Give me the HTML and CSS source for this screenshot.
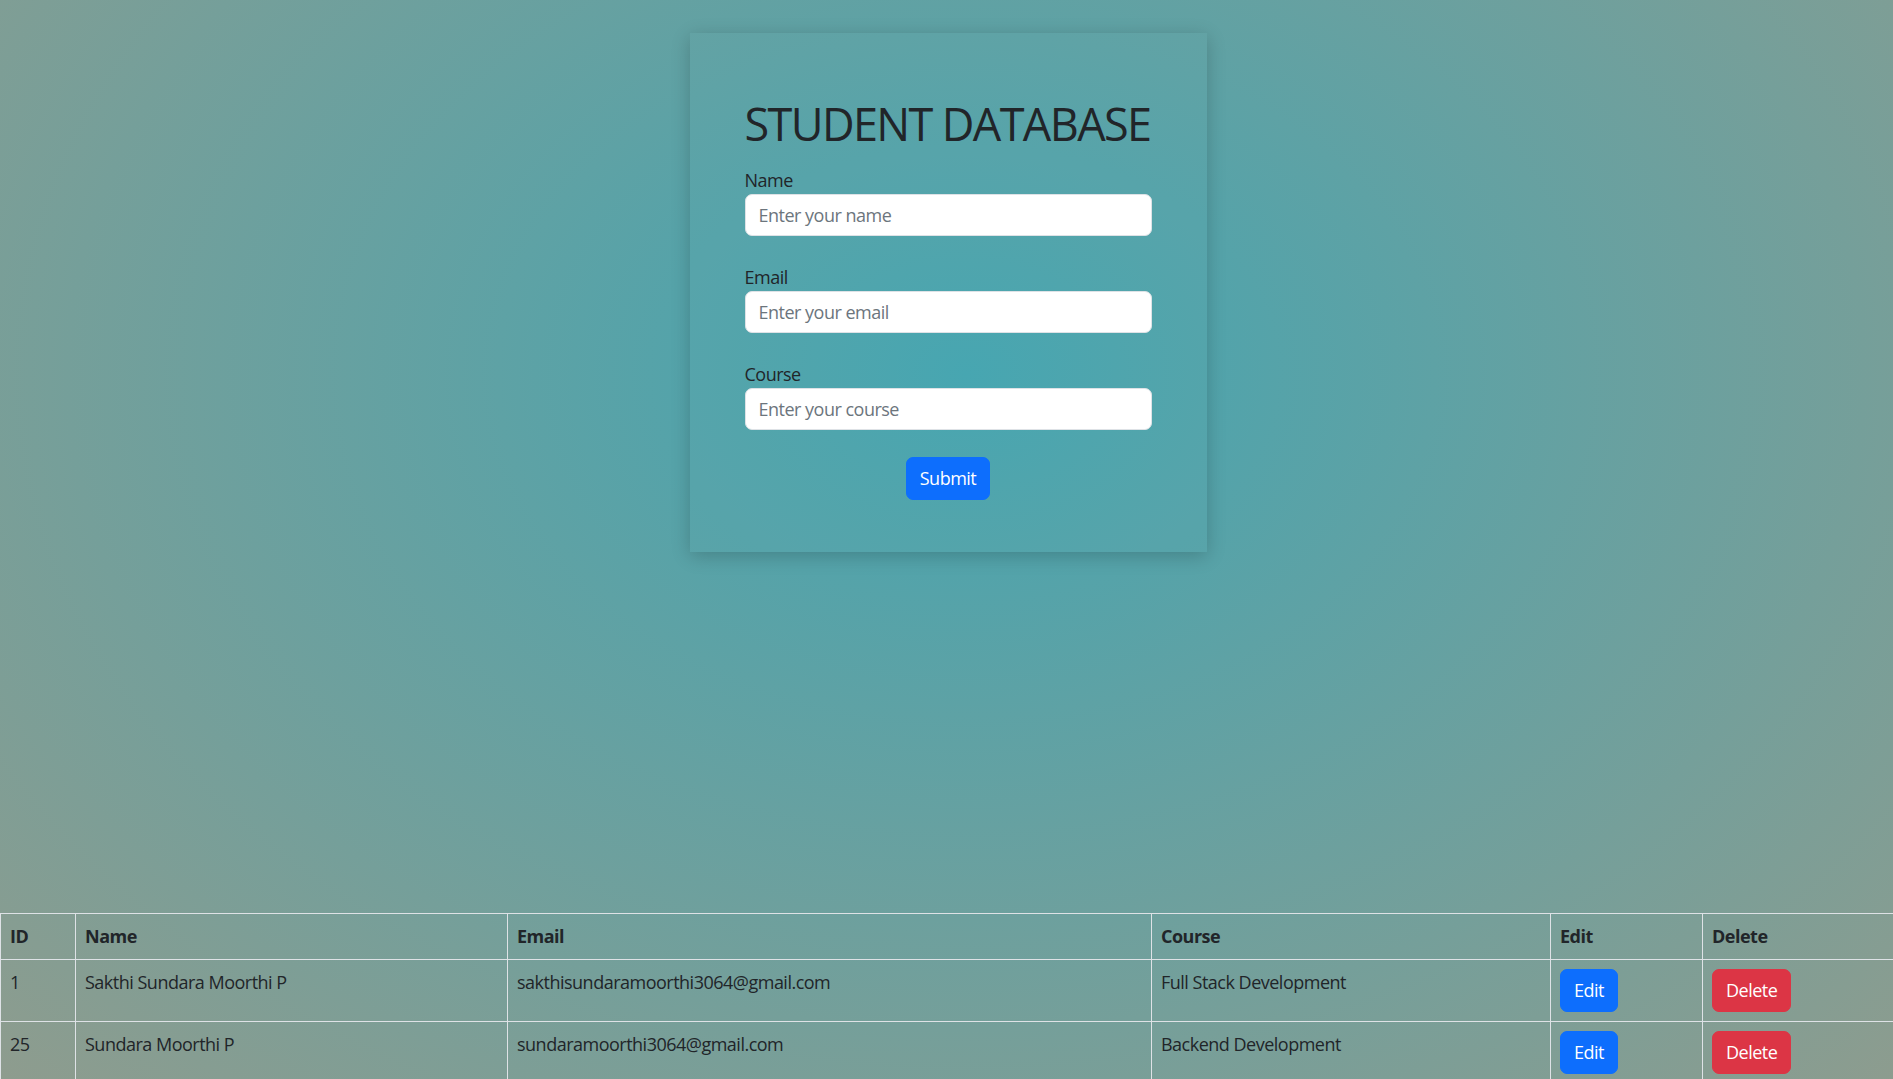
FILE: index.html
```html
<!DOCTYPE html>
<html lang="en">
<head>
<meta charset="utf-8">
<title>Student Database</title>
<link rel="stylesheet" href="styles.css">
</head>
<body>
<div class="wrap">
  <form class="card">
    <h1 class="title">STUDENT DATABASE</h1>
    <div class="group">
      <label class="label" for="name">Name</label>
      <input class="input" id="name" type="text" placeholder="Enter your name">
    </div>
    <div class="group">
      <label class="label" for="email">Email</label>
      <input class="input" id="email" type="email" placeholder="Enter your email">
    </div>
    <div class="group group-last">
      <label class="label" for="course">Course</label>
      <input class="input" id="course" type="text" placeholder="Enter your course">
    </div>
    <div class="actions">
      <button type="button" class="btn btn-primary">Submit</button>
    </div>
  </form>
</div>
<table class="table">
  <colgroup>
    <col class="c-id"><col class="c-name"><col class="c-email"><col class="c-course"><col class="c-edit"><col class="c-del">
  </colgroup>
  <thead>
    <tr><th>ID</th><th>Name</th><th>Email</th><th>Course</th><th>Edit</th><th>Delete</th></tr>
  </thead>
  <tbody>
    <tr>
      <td>1</td><td>Sakthi Sundara Moorthi P</td><td>sakthisundaramoorthi3064@gmail.com</td><td>Full Stack Development</td>
      <td><button type="button" class="btn btn-primary">Edit</button></td>
      <td><button type="button" class="btn btn-danger">Delete</button></td>
    </tr>
    <tr>
      <td>25</td><td>Sundara Moorthi P</td><td>sundaramoorthi3064@gmail.com</td><td>Backend Development</td>
      <td><button type="button" class="btn btn-primary">Edit</button></td>
      <td><button type="button" class="btn btn-danger">Delete</button></td>
    </tr>
  </tbody>
</table>
</body>
</html>
```
FILE: styles.css
```css
html {
  background-color: #8e9c8e;
  background-image: radial-gradient(1366px 997px at 966px 374px, #45a5b1 0%, #8e9c8e 100%);
  background-repeat: no-repeat;
}
body {
  margin: 0;
  font-family: "Open Sans", "Noto Sans", sans-serif;
  font-size: 18px;
  line-height: 27px;
  letter-spacing: -0.028em;
  color: #212529;
}
.wrap {
  display: flex;
  justify-content: center;
  padding-top: 33px;
  padding-left: 3px;
}
.card {
  box-sizing: border-box;
  width: 517px;
  padding: 54px 55px 52px;
  box-shadow: 0 4px 18px rgba(0, 0, 0, 0.2);
  background: rgba(255, 255, 255, 0.01);
  margin: 0;
}
.title {
  margin: 10px 0 16px;
  font-size: 45px;
  line-height: 54px;
  font-weight: 400;
  letter-spacing: -0.036em;
  white-space: nowrap;
  color: #212529;
}
.group {
  margin-bottom: 28px;
}
.group-last {
  margin-bottom: 27px;
}
.label {
  display: block;
  line-height: 27px;
}
.input {
  display: block;
  box-sizing: border-box;
  width: 100%;
  height: 42px;
  margin: 0;
  padding: 6px 13px;
  font: inherit;
  letter-spacing: inherit;
  color: #212529;
  background: #fff;
  border: 1px solid #dee2e6;
  border-radius: 7px;
}
.input::placeholder {
  color: #6c757d;
  opacity: 1;
}
.actions {
  display: flex;
  justify-content: center;
}
.btn {
  display: inline-block;
  box-sizing: border-box;
  padding: 7px 13px;
  font: inherit;
  line-height: 27px;
  letter-spacing: inherit;
  color: #fff;
  border: 1px solid transparent;
  border-radius: 7px;
  vertical-align: middle;
  cursor: pointer;
}
.btn-primary {
  background: #0d6efd;
  border-color: #0d6efd;
}
.btn-danger {
  background: #dc3545;
  border-color: #dc3545;
}
.table {
  width: 100%;
  margin-top: 361px;
  border-collapse: collapse;
  table-layout: fixed;
}
.c-id { width: 75px; }
.c-name { width: 432px; }
.c-email { width: 644px; }
.c-course { width: 399px; }
.c-edit { width: 152px; }
.c-del { width: 191px; }
.table th,
.table td {
  border: 1px solid #dee2e6;
  padding: 9px 9px;
  text-align: left;
  vertical-align: top;
  line-height: 27px;
}
.table th {
  font-weight: 700;
}
```
